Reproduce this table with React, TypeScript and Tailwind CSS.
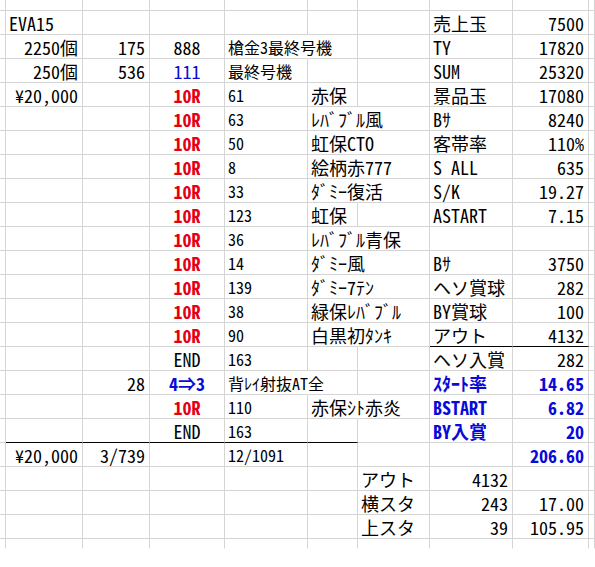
import React from "react";

type ColKey = "Z" | "A" | "B" | "C" | "D" | "E" | "F" | "G" | "H" | "I";
type Align = "l" | "r" | "c";
type CellSpec = { t: string; a?: Align; c?: string };
type RowSpec = {
  h?: "top" | "full" | "last";
  cells?: Partial<Record<ColKey, CellSpec | string>>;
  hide?: ColKey[];
  black?: ColKey[];
};

const COLS: { k: ColKey; w: string; def: Align; sz: string }[] = [
  { k: "Z", w: "w-[6px]", def: "l", sz: "text-[18px]" },
  { k: "A", w: "w-[77px]", def: "r", sz: "text-[18px]" },
  { k: "B", w: "w-[67px]", def: "r", sz: "text-[18px]" },
  { k: "C", w: "w-[75px]", def: "c", sz: "text-[18px]" },
  { k: "D", w: "w-[83px]", def: "l", sz: "text-[16px]" },
  { k: "E", w: "w-[50px]", def: "l", sz: "text-[18px]" },
  { k: "F", w: "w-[72px]", def: "l", sz: "text-[18px]" },
  { k: "G", w: "w-[83px]", def: "l", sz: "text-[18px]" },
  { k: "H", w: "w-[76px]", def: "r", sz: "text-[18px]" },
  { k: "I", w: "flex-1", def: "l", sz: "text-[18px]" },
];

const RED = "text-[#e60012] font-bold";
const BLUE = "text-[#0a0ad8]";
const BB = "text-[#0a0ad8] font-bold";
const R10: CellSpec = { t: "10R", c: RED };

const ROWS: RowSpec[] = [
  { h: "top" },
  { cells: { A: { t: "EVA15", a: "l" }, G: "売上玉", H: "7500" } },
  {
    cells: { A: "2250個", B: "175", C: "888", D: "槍金3最終号機", G: "TY", H: "17820" },
    hide: ["D"],
  },
  { cells: { A: "250個", B: "536", C: { t: "111", c: BLUE }, D: "最終号機", G: "SUM", H: "25320" } },
  { cells: { A: "¥20,000", C: R10, D: "61", E: "赤保", G: "景品玉", H: "17080" } },
  { cells: { C: R10, D: "63", E: "ﾚﾊﾞﾌﾞﾙ風", G: "Bｻ", H: "8240" }, hide: ["E"] },
  { cells: { C: R10, D: "50", E: "虹保CTO", G: "客帯率", H: "110%" }, hide: ["E"] },
  { cells: { C: R10, D: "8", E: "絵柄赤777", G: "S ALL", H: "635" }, hide: ["E"] },
  { cells: { C: R10, D: "33", E: "ﾀﾞﾐｰ復活", G: "S/K", H: "19.27" }, hide: ["E"] },
  { cells: { C: R10, D: "123", E: "虹保", G: "ASTART", H: "7.15" } },
  { cells: { C: R10, D: "36", E: "ﾚﾊﾞﾌﾞﾙ青保" }, hide: ["E"] },
  { cells: { C: R10, D: "14", E: "ﾀﾞﾐｰ風", G: "Bｻ", H: "3750" }, hide: ["E"] },
  { cells: { C: R10, D: "139", E: "ﾀﾞﾐｰ7ﾃﾝ", G: "ヘソ賞球", H: "282" }, hide: ["E"] },
  { cells: { C: R10, D: "38", E: "緑保ﾚﾊﾞﾌﾞﾙ", G: "BY賞球", H: "100" }, hide: ["E"] },
  {
    cells: { C: R10, D: "90", E: "白黒初ﾀﾝｷ", G: "アウト", H: "4132" },
    hide: ["E"],
    black: ["G", "H"],
  },
  { cells: { C: "END", D: "163", G: "ヘソ入賞", H: "282" } },
  {
    cells: {
      B: "28",
      C: { t: "4⇒3", c: BB },
      D: "背ﾚｲ射抜AT全",
      G: { t: "ｽﾀｰﾄ率", c: BB },
      H: { t: "14.65", c: BB },
    },
    hide: ["D"],
  },
  {
    cells: { C: R10, D: "110", E: "赤保ｼﾄ赤炎", G: { t: "BSTART", c: BB }, H: { t: "6.82", c: BB } },
    hide: ["E"],
  },
  {
    cells: { C: "END", D: "163", G: { t: "BY入賞", c: BB }, H: { t: "20", c: BB } },
    black: ["A", "B", "C", "D", "E"],
  },
  { cells: { A: "¥20,000", B: "3/739", D: "12/1091", H: { t: "206.60", c: BB } } },
  { cells: { F: "アウト", G: { t: "4132", a: "r" } } },
  { cells: { F: "横スタ", G: { t: "243", a: "r" }, H: "17.00" } },
  { cells: { F: "上スタ", G: { t: "39", a: "r" }, H: "105.95" } },
  { h: "last" },
];

function Cell({
  col,
  spec,
  hidden,
  black,
  last,
}: {
  col: (typeof COLS)[number];
  spec?: CellSpec;
  hidden: boolean;
  black: boolean;
  last: boolean;
}) {
  const a = spec?.a ?? col.def;
  const alignCls = a === "l" ? "justify-start pl-[3px]" : a === "r" ? "justify-end pr-[4px]" : "justify-center";
  const rCls = hidden ? "border-r-transparent" : "border-r-[#d4d4d4]";
  const bCls = black ? "border-b-black" : last ? "border-b-transparent" : "border-b-[#d4d4d4]";
  return (
    <div
      className={`${col.w} ${col.sz} shrink-0 flex items-end pb-[2px] whitespace-nowrap leading-[18px] border-r border-b ${rCls} ${bCls} ${alignCls}`}
    >
      {spec ? <span className={spec.c ?? ""}>{spec.t}</span> : null}
    </div>
  );
}

export default function App() {
  return (
    <div className="w-[595px] h-[567px] overflow-hidden bg-white text-black font-['Noto_Sans_Mono_CJK_JP','Noto_Sans_CJK_JP',sans-serif]">
      {ROWS.map((row, i) => {
        const hCls = row.h === "top" ? "h-[11px]" : row.h === "last" ? "h-[10px]" : "h-[24px]";
        return (
          <div key={i} className={`flex ${hCls}`}>
            {COLS.map((col) => {
              const raw = row.cells?.[col.k];
              const spec: CellSpec | undefined = typeof raw === "string" ? { t: raw } : raw;
              return (
                <Cell
                  key={col.k}
                  col={col}
                  spec={spec}
                  hidden={!!row.hide?.includes(col.k)}
                  black={!!row.black?.includes(col.k)}
                  last={row.h === "last"}
                />
              );
            })}
          </div>
        );
      })}
    </div>
  );
}
